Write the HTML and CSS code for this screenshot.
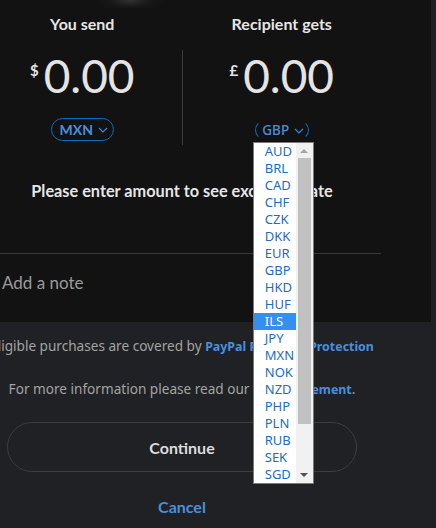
FILE: index.html
```html
<!DOCTYPE html>
<html>
<head>
<meta charset="utf-8">
<link rel="stylesheet" href="styles.css">
</head>
<body>
<div class="page">
  <section class="panel">
    <div class="glow"></div>
    <div class="inner">
      <div class="columns">
        <div class="col">
          <div class="label">You send</div>
          <div class="amount"><span class="sym">$</span><span class="num">0.00</span></div>
          <div class="pill mxn">MXN <svg class="chev" width="10" height="6" viewBox="0 0 10 6"><path d="M1 1l4 4 4-4" fill="none" stroke="currentColor" stroke-width="1.2"/></svg></div>
        </div>
        <div class="divider"></div>
        <div class="col">
          <div class="label">Recipient gets</div>
          <div class="amount"><span class="sym">£</span><span class="num">0.00</span></div>
          <div class="pillwrap">
            <div class="pill gbp">GBP <svg class="chev" width="10" height="6" viewBox="0 0 10 6"><path d="M1 1l4 4 4-4" fill="none" stroke="currentColor" stroke-width="1.2"/></svg></div>
            <div class="dropdown">
              <ul class="opts">
                <li>AUD</li><li>BRL</li><li>CAD</li><li>CHF</li><li>CZK</li>
                <li>DKK</li><li>EUR</li><li>GBP</li><li>HKD</li><li>HUF</li>
                <li class="sel">ILS</li><li>JPY</li><li>MXN</li><li>NOK</li><li>NZD</li>
                <li>PHP</li><li>PLN</li><li>RUB</li><li>SEK</li><li>SGD</li>
              </ul>
              <div class="scroll">
                <div class="arr up"></div>
                <div class="thumb"></div>
                <div class="arr down"></div>
              </div>
            </div>
          </div>
        </div>
      </div>
      <p class="rate">Please enter amount to see exchange rate</p>
      <div class="note">Add a note</div>
    </div>
  </section>
  <section class="bottom">
    <div class="binner">
      <p class="info">Eligible purchases are covered by <a>PayPal Purchase Protection</a></p>
      <p class="info more">For more information please read our <a>user agreement</a>.</p>
      <button class="continue">Continue</button>
      <div class="cancel">Cancel</div>
    </div>
  </section>
</div>
</body>
</html>
```
FILE: styles.css
```css
* { box-sizing: border-box; }
html, body { margin: 0; padding: 0; }
body {
  background: #202124;
  width: 436px;
  height: 528px;
  overflow: hidden;
  font-family: "Noto Sans", sans-serif;
}
.page { width: 436px; }
.panel {
  position: relative;
  width: 431px;
  height: 322px;
  background: #121212;
}
.glow {
  position: absolute;
  left: 95px;
  top: 0;
  width: 70px;
  height: 8px;
  background: radial-gradient(ellipse 35px 12px at 50% 0%, rgba(110,110,110,0.35) 0%, rgba(60,60,60,0.15) 55%, rgba(18,18,18,0) 100%);
}
.inner {
  margin-left: -17px;
  width: 398px;
}
.columns {
  display: flex;
  padding-top: 14px;
}
.col {
  flex: 1;
  display: flex;
  flex-direction: column;
  align-items: center;
}
.label {
  font-family: Lato, sans-serif;
  font-weight: 700;
  font-size: 16px;
  color: #e6e6e6;
  line-height: 20px;
}
.amount {
  display: flex;
  align-items: flex-start;
  margin-top: 17px;
  height: 50px;
  color: #e4e4e4;
}
.sym {
  font-family: Lato, sans-serif;
  font-weight: 700;
  font-size: 15px;
  margin-top: 10px;
  margin-right: 5px;
  line-height: 18px;
}
.num {
  font-family: Lato, sans-serif;
  font-weight: 400;
  font-size: 46px;
  line-height: 50px;
}
.divider {
  width: 1px;
  background: #3a3a3a;
  margin-top: 36px;
  height: 95px;
}
.pill {
  display: flex;
  align-items: center;
  justify-content: center;
  gap: 5px;
  font-family: Lato, sans-serif;
  font-weight: 700;
  font-size: 14px;
  color: #4a8fdc;
  border-radius: 12px;
}
.chev { color: #3b86d6; margin-top: 1px; }
.mxn {
  margin-top: 17px;
  width: 63px;
  height: 23px;
  border: 1px solid #0b6cc4;
  padding-left: 3px;
}
.pillwrap {
  position: relative;
  margin-top: 19px;
  height: 22px;
  display: flex;
  flex-direction: column;
  align-items: center;
}
.gbp {
  width: 54px;
  height: 20px;
  border: 1.5px solid #0b6cc4;
  border-top-color: transparent;
  border-bottom-color: transparent;
  border-radius: 10px;
  font-family: "Noto Sans", sans-serif;
  font-weight: 500;
  font-size: 13.5px;
  padding-left: 3px;
}
.dropdown {
  position: absolute;
  top: 22px;
  left: 50%;
  margin-left: -29px;
  width: 61px;
  height: 342px;
  background: #fff;
  border: 1px solid #7a7a7a;
  display: flex;
  z-index: 5;
}
.opts {
  list-style: none;
  margin: 0;
  padding: 0;
  width: 42px;
}
.opts li {
  height: 17px;
  line-height: 17px;
  font-family: "Noto Sans", sans-serif;
  font-size: 13px;
  color: #1a6cc7;
  padding-left: 11px;
}
.opts li.sel {
  background: #3390ee;
  color: #fff;
}
.scroll {
  width: 17px;
  background: #f1f1f1;
  display: flex;
  flex-direction: column;
  align-items: center;
}
.arr {
  width: 0; height: 0;
  border-left: 4px solid transparent;
  border-right: 4px solid transparent;
  margin: 6px 0 5px;
}
.arr.up { border-bottom: 4px solid #a3a3a3; }
.arr.down { border-top: 4px solid #505050; margin-top: auto; margin-bottom: 6px; }
.thumb {
  width: 13px;
  height: 266px;
  background: #c1c1c1;
}
.rate {
  margin: 36px 0 0;
  text-align: center;
  font-family: Lato, sans-serif;
  font-weight: 700;
  font-size: 16.3px;
  color: #e6e6e6;
  line-height: 20px;
}
.note {
  margin-top: 52px;
  border-top: 1px solid #3a3a3a;
  padding: 18px 0 0 19px;
  font-family: Lato, sans-serif;
  font-size: 17px;
  color: #9a9a9a;
}
.bottom {
  width: 436px;
}
.binner {
  margin-left: -17px;
  width: 398px;
  padding-top: 14px;
  display: flex;
  flex-direction: column;
  align-items: center;
}
.info {
  margin: 0;
  white-space: nowrap;
  font-family: "Noto Sans", sans-serif;
  font-size: 13.6px;
  line-height: 20px;
  color: #a3a3a3;
  text-align: center;
}
.info a { color: #4a8fdc; font-weight: 700; font-family: "Noto Sans", sans-serif; font-size: 12.4px; }
.more { margin-top: 22px; }
.continue {
  margin-top: 22px;
  width: 350px;
  height: 50px;
  border-radius: 25px;
  background: transparent;
  border: 1px solid #3d3d3f;
  font-family: Lato, sans-serif;
  font-weight: 700;
  font-size: 16px;
  color: #dcdcdc;
}
.cancel {
  margin-top: 25px;
  font-family: Lato, sans-serif;
  font-weight: 700;
  font-size: 16px;
  color: #4a8fdc;
}
```
